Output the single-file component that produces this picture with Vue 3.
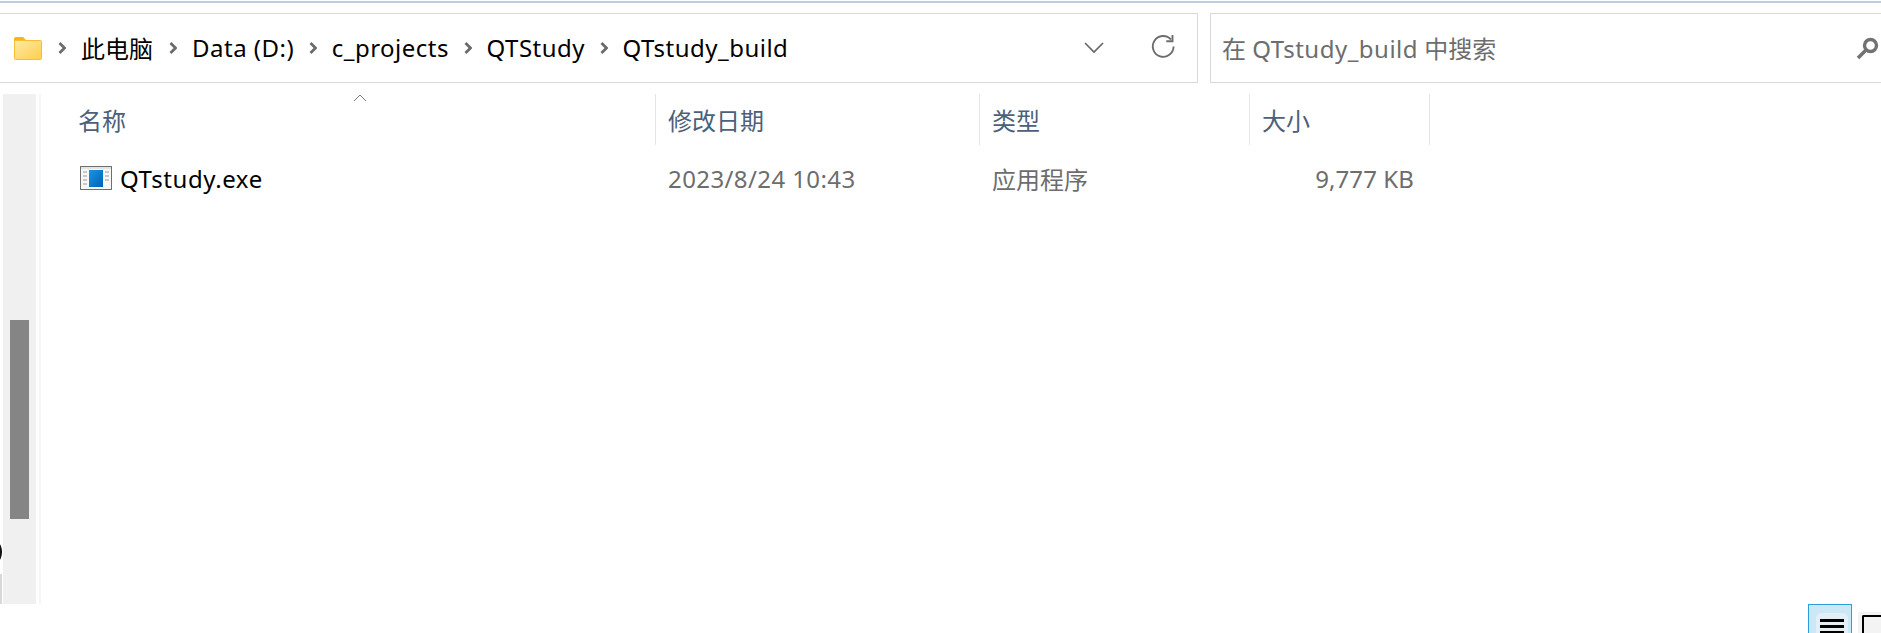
<script setup>
const crumbs = [
  { label: '此电脑', cjk: true },
  { label: 'Data (D:)' },
  { label: 'c_projects' },
  { label: 'QTStudy' },
  { label: 'QTstudy_build' },
]
const columns = [
  { label: '名称', cls: 'col-name' },
  { label: '修改日期', cls: 'col-date' },
  { label: '类型', cls: 'col-type' },
  { label: '大小', cls: 'col-size' },
]
</script>

<template>
  <div class="window">
    <div class="stripe"></div>

    <div class="toolbar">
      <div class="address">
        <svg class="folder" width="28" height="23" viewBox="0 0 28 23">
          <defs>
            <linearGradient id="folderFill" x1="0" y1="0" x2="1" y2="1">
              <stop offset="0" stop-color="#ffe9a6" />
              <stop offset="1" stop-color="#ffcf4d" />
            </linearGradient>
          </defs>
          <path d="M0 2a2 2 0 0 1 2-2h7l3 3v3H0z" fill="#f9b518" />
          <rect x="0.5" y="3.5" width="27" height="19" rx="1" fill="url(#folderFill)" stroke="#f9bd35" />
        </svg>
        <template v-for="c in crumbs" :key="c.label">
          <svg class="chev" width="8" height="12" viewBox="0 0 8 12">
            <path d="M1.5 1l5 5-5 5" fill="none" stroke="#6b6b6b" stroke-width="2.8" />
          </svg>
          <span class="crumb" :class="c.cjk ? 'cjk' : 'latin'">{{ c.label }}</span>
        </template>
        <div class="addr-tools">
          <svg class="drop" width="20" height="12" viewBox="0 0 20 12">
            <path d="M1 1l9 9 9-9" fill="none" stroke="#666" stroke-width="1.6" />
          </svg>
          <svg class="refresh" width="24" height="25" viewBox="0 0 24 25">
            <path d="M20 5.5A10.4 10.4 0 1 0 22.6 12.6" fill="none" stroke="#6d6d6d" stroke-width="1.9" />
            <path d="M21.5 1v6.2h-6.2" fill="none" stroke="#6d6d6d" stroke-width="1.9" />
          </svg>
        </div>
      </div>
      <div class="search">
        <span class="placeholder">在 <span class="latin">QTstudy_build</span> 中搜索</span>
        <svg class="search-icon" width="23" height="23" viewBox="0 0 23 23">
          <circle cx="14.5" cy="8.5" r="6" fill="none" stroke="#727272" stroke-width="3.4" />
          <path d="M10 13L2 21" stroke="#727272" stroke-width="3.6" />
        </svg>
      </div>
    </div>

    <div class="body">
      <div class="edge">
        <div class="edge-mark"></div>
        <div class="edge-box"></div>
      </div>
      <div class="track"><div class="thumb"></div></div>
      <div class="strip"></div>

      <div class="list">
        <div class="head">
          <div v-for="col in columns" :key="col.label" class="th" :class="col.cls">{{ col.label }}</div>
          <svg class="sort" width="14" height="8" viewBox="0 0 14 8">
            <path d="M1 7l6-6 6 6" fill="none" stroke="#7b7b7b" stroke-width="1" />
          </svg>
        </div>
        <div class="row">
          <div class="td col-name name-cell">
            <svg class="exe" width="32" height="24" viewBox="0 0 32 24">
              <defs>
                <linearGradient id="exeFill" x1="0" y1="0" x2="1" y2="1">
                  <stop offset="0" stop-color="#1b93e6" />
                  <stop offset="1" stop-color="#0063b5" />
                </linearGradient>
              </defs>
              <rect x="0.5" y="0.5" width="31" height="23" fill="#f7f7f7" stroke="#6f6f6f" />
              <rect x="1" y="1" width="30" height="2" fill="#e3e3e3" />
              <rect x="9" y="4" width="14" height="17" fill="url(#exeFill)" />
              <path d="M3 6h4M3 10h4M3 14h4M3 18h4M25 6h4M25 10h4M25 14h4" stroke="#9a9a9a" stroke-width="1" />
            </svg>
            <span class="latin file-name">QTstudy.exe</span>
          </div>
          <div class="td col-date date-cell">2023/8/24 10:43</div>
          <div class="td col-type">应用程序</div>
          <div class="td col-size size-cell">9,777 KB</div>
        </div>
      </div>
    </div>

    <div class="status">
      <div class="view-btn active">
        <div class="view-inner">
          <i></i><i></i><i></i>
        </div>
      </div>
      <div class="view-btn">
        <div class="view-square"></div>
      </div>
    </div>
  </div>
</template>

<style scoped>
.window {
  width: 1881px; height: 633px; overflow: hidden; background: #fff;
  display: flex; flex-direction: column;
  font-family: "Noto Sans", "Noto Sans CJK SC", sans-serif;
  font-size: 24px;
}
.latin { letter-spacing: 0.5px; }
.stripe { height: 2px; margin-top: 1px; background: #bccfe2; flex-shrink: 0; }

.toolbar { display: flex; gap: 12px; margin-top: 10px; height: 70px; flex-shrink: 0; }
.address {
  width: 1198px; display: flex; align-items: center; padding-left: 14px;
  border: 1px solid #d9d9d9; border-left: none; box-sizing: border-box;
}
.folder { margin-right: 16px; flex-shrink: 0; }
.chev { flex-shrink: 0; margin-right: 15px; }
.crumb { margin-right: 14.5px; color: #000; white-space: nowrap; position: relative; top: -1px; }
.crumb.cjk { margin-right: 16px; }
.addr-tools { margin-left: auto; display: flex; align-items: center; gap: 47px; padding-right: 22px; }
.refresh { position: relative; top: -2px; }

.search {
  flex: 1; display: flex; align-items: center; justify-content: space-between;
  padding: 0 0 0 11px; box-sizing: border-box;
  border-top: 1px solid #d9d9d9; border-bottom: 1px solid #d9d9d9; border-left: 1px solid #d9d9d9;
}
.placeholder { color: #6d6d6d; position: relative; top: -1px; }
.search-icon { margin-right: 2px; }

.body { display: flex; height: 510px; margin-top: 11px; flex-shrink: 0; }
.edge { width: 3px; position: relative; flex-shrink: 0; }
.edge-mark {
  position: absolute; left: -6px; top: 449px; width: 8px; height: 18px;
  border: 2px solid #111; border-radius: 50%; box-sizing: border-box;
}
.edge-box { position: absolute; left: 0; bottom: 0; width: 2px; height: 30px; background: #d8d8d8; }
.track { width: 33px; background: #f0f0f0; flex-shrink: 0; padding: 226px 7px 0; box-sizing: border-box; }
.thumb { width: 19px; height: 199px; background: #858585; }
.strip { width: 2px; margin-left: 3px; background: #f6f6f6; flex-shrink: 0; }

.list { flex: 1; }
.head { display: flex; height: 51px; position: relative; color: #4c607a; }
.th { box-sizing: border-box; display: flex; align-items: center; padding-left: 12px; border-right: 1px solid #e5e5e5; }
.col-name { width: 615px; padding-left: 37px; flex-shrink: 0; }
.col-date { width: 324px; flex-shrink: 0; }
.col-type { width: 270px; flex-shrink: 0; }
.col-size { width: 180px; flex-shrink: 0; }
.sort { position: absolute; left: 312px; top: 0; }

.row { display: flex; align-items: center; height: 66px; color: #6d6d6d; }
.td { box-sizing: border-box; padding-left: 12px; white-space: nowrap; }
.name-cell { display: flex; align-items: center; gap: 8px; padding-left: 39px; color: #000; }
.file-name { letter-spacing: 0.6px; }
.date-cell { letter-spacing: 0.4px; }
.size-cell { text-align: right; padding-right: 16px; letter-spacing: 0.1px; }
.exe { flex-shrink: 0; }

.status { flex: 1; display: flex; justify-content: flex-end; align-items: flex-start; gap: 6px; }
.view-btn { width: 44px; height: 40px; box-sizing: border-box; flex-shrink: 0; }
.view-btn.active { background: #cce8f6; border: 1px solid #2a9fdc; padding: 8px 3px 0 7px; }
.view-inner { height: 40px; background: #e4eff5; border-radius: 5px; padding: 6px 4px 0; box-sizing: border-box; }
.view-inner i { display: block; height: 3px; margin-bottom: 3px; background: #000; }
.view-btn:not(.active) { width: 23px; padding: 11px 0 0 4px; background: linear-gradient(#fff 8px, #f3f3f3 8px); border-radius: 4px 0 0 0; }
.view-square { height: 30px; border: 2px solid #000; border-right: none; border-radius: 2px 0 0 0; }
</style>
